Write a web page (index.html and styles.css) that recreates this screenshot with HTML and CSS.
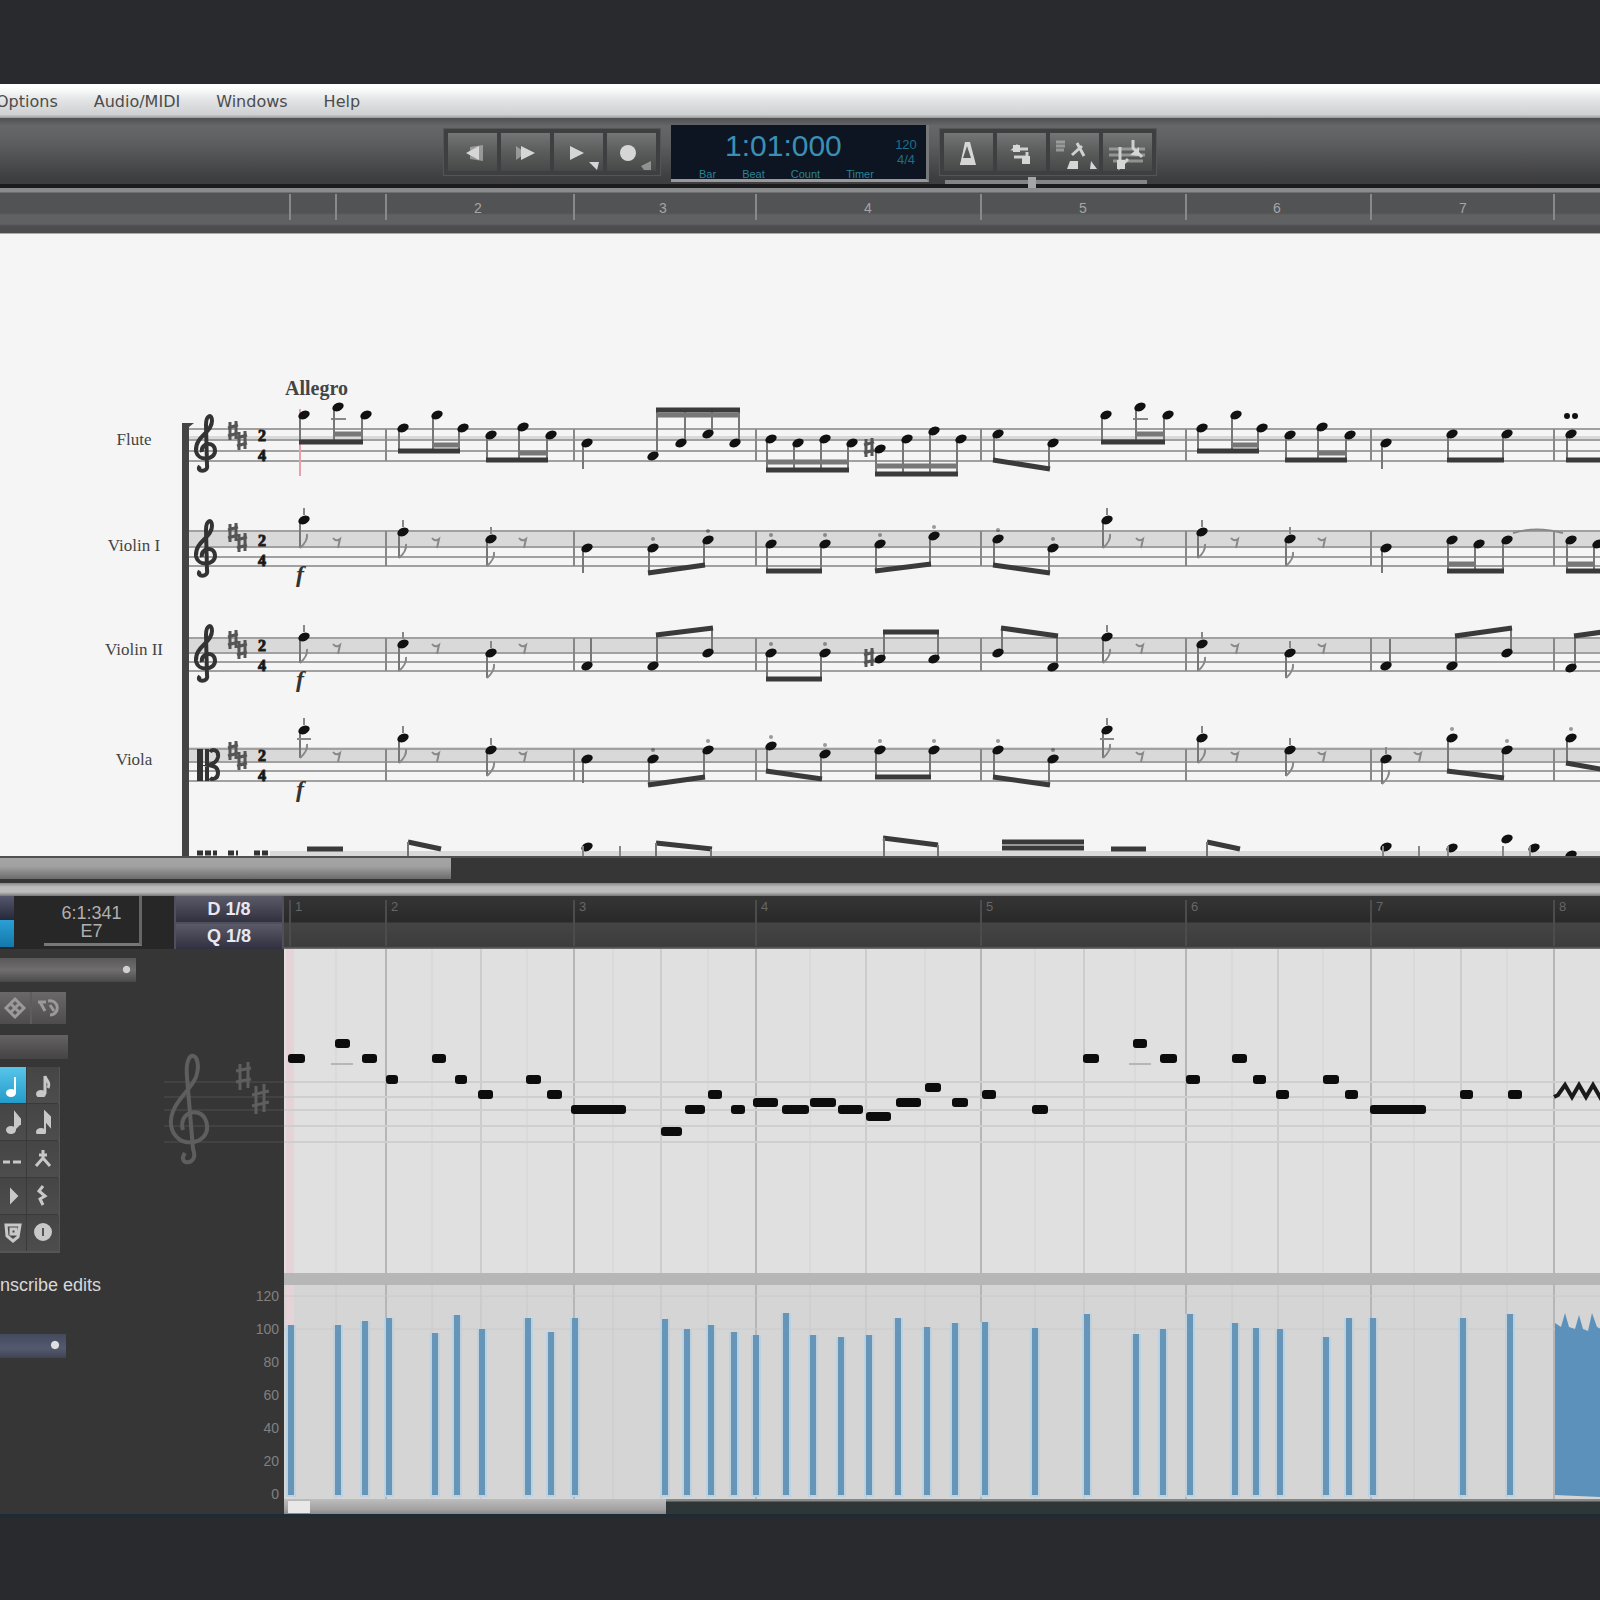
FILE: index.html
```html
<!DOCTYPE html>
<html lang="en">
<head>
    <meta charset="UTF-8">
    <meta name="viewport" content="width=device-width, initial-scale=1.0">
    <title>Score Editor</title>
    <link rel="stylesheet" href="styles.css">
</head>
<body>
    <nav class="menubar">
        <a href="#">Options</a>
        <a href="#">Audio/MIDI</a>
        <a href="#">Windows</a>
        <a href="#">Help</a>
    </nav>

    <header class="toolbar">
        <div class="btn-group">
            <button class="tool" aria-label="Rewind"><svg width="48" height="40"><path class="dim" d="M22 14l13-2v16l-13-2z"/><path d="M18 20l13-7v14z"/></svg></button>
            <button class="tool" aria-label="Forward"><svg width="48" height="40"><path class="dim" d="M15 13l10 7-10 7z"/><path d="M20 13l14 7-14 7z"/></svg></button>
            <button class="tool" aria-label="Play"><svg width="48" height="40"><path d="M16 13l14 7-14 7z"/><path d="M35 29h10l-2 8z"/></svg></button>
            <button class="tool" aria-label="Record"><svg width="48" height="40"><circle cx="21" cy="20" r="8"/><path class="dim" d="M34 33l10-5v9h-7z"/></svg></button>
        </div>
        <div class="lcd">
            <div class="lcd-time">1:01:000</div>
            <div class="lcd-tempo"><span>120</span><span>4/4</span></div>
            <div class="lcd-labels"><span>Bar</span><span>Beat</span><span>Count</span><span>Timer</span></div>
        </div>
        <div class="right-tools">
            <div class="btn-group">
                <button class="tool" aria-label="Metronome"><svg width="48" height="40"><path fill-rule="evenodd" d="M21 9h5l6 23H16zM23 13l-4 12h8z"/><path d="M18 25h12v7H16z"/></svg></button>
                <button class="tool" aria-label="Loop"><svg width="48" height="40"><path class="line" d="M31 16H17l4-4M17 24h14M30 19v8"/><path d="M16 12h7v7h-7zM25 23h8v8h-8z"/></svg></button>
                <button class="tool" aria-label="Count in"><svg width="48" height="40"><path class="line dim" d="M6 9h9M6 13h9M6 17h8"/><path class="line" d="M27 10l7 13M22 22l10-9"/><path d="M17 36l3-8h8v8zM41 28l6 8h-7z"/></svg></button>
                <button class="tool" aria-label="Punch"><svg width="48" height="40"><path class="line dim" d="M6 16h36M6 22h36M10 28h30"/><path class="line" d="M30 7v8l9 9M17 14v20l8-8"/><path d="M27 22l9-8v9zM14 27h8v9h-8z"/></svg></button>
            </div>
            <input class="speed" type="range" min="0" max="100" value="43" aria-label="Speed">
        </div>
    </header>

    <svg class="ruler" id="ruler"></svg>

    <main>
        <section class="score">
            <svg id="score" role="img" aria-label="Score"></svg>
        </section>
        <div class="h-scroll"><div class="h-thumb"></div></div>
        <div class="splitter"></div>

        <section class="editor">
            <aside class="side">
                <div class="side-head">
                    <div class="modes"><button aria-label="Mode A"></button><button class="on" aria-label="Mode B"></button></div>
                    <div class="position"><span>6:1:341</span><span>E7</span></div>
                    <div class="quant"><button>D 1/8</button><button>Q 1/8</button></div>
                </div>
                <div class="side-body">
                    <div class="controls">
                        <select class="track-select" aria-label="Track"><option></option></select>
                        <div class="small-tools">
                            <button aria-label="Settings"><svg width="24" height="24"><path d="M12 3l9 9-9 9-9-9zM7 7l10 10M17 7L7 17"/></svg></button>
                            <button aria-label="Refresh"><svg width="28" height="24"><path d="M3 6h8M5 6l5 9M13 5c12-2 12 14 2 14M15 9l4 6"/></svg></button>
                        </div>
                        <div class="slot"></div>
                        <div class="palette" id="palette"></div>
                        <div class="caption">nscribe edits</div>
                        <select class="edit-select" aria-label="Edits"><option></option></select>
                    </div>
                    <svg class="side-staff" id="sideStaff"></svg>
                </div>
            </aside>
            <div class="roll">
                <svg class="roll-ruler" id="rollRuler"></svg>
                <svg class="notes" id="notes"></svg>
                <div class="roll-divider"></div>
                <svg class="velocity" id="velocity"></svg>
                <div class="roll-scroll"><div class="roll-thumb"><button aria-label="Scroll left"></button></div></div>
            </div>
        </section>
    </main>

    <script src="script.js"></script>
</body>
</html>
```
FILE: styles.css
```css
* {
    box-sizing: border-box;
}
body {
    margin: 0;
    padding-top: 84px;
    min-height: 100vh;
    background-color: #292a2e;
    font-family: "Liberation Sans", Arial, sans-serif;
    overflow-x: hidden;
}
svg {
    display: block;
}
button {
    border: 0;
    padding: 0;
    font-family: inherit;
}

/* Menu */
.menubar {
    display: flex;
    gap: 36px;
    height: 34px;
    align-items: center;
    background: linear-gradient(#fff 10%, #e4e5e6 45%, #cfd0d1 90%, #999);
}
.menubar a {
    color: #4c4c4c;
    text-decoration: none;
    font-family: "DejaVu Sans", sans-serif;
    font-size: 16px;
}
.menubar a:first-child {
    margin-left: -4px;
}

/* Transport toolbar */
.toolbar {
    display: flex;
    justify-content: center;
    gap: 10px;
    height: 70px;
    padding-top: 7px;
    background: linear-gradient(#505052, #666769 12%, #5c5d5f 40%, #3e3e40 92%);
    border-bottom: 4px solid #1c1c1e;
}
.btn-group {
    display: flex;
    gap: 4px;
    height: 48px;
    padding: 4px;
    margin-top: 3px;
    background: #3e3f40;
    border: 1px solid #555;
}
.tool {
    width: 49px;
    background: linear-gradient(#747575, #5a5b5b 50%, #474848);
    fill: #d6d6d6;
}
.tool .dim {
    opacity: 0.5;
}
.tool .line {
    fill: none;
    stroke: #d0d0d0;
    stroke-width: 3;
}
.lcd {
    display: grid;
    grid-template-columns: 1fr 40px;
    grid-template-rows: 1fr 14px;
    width: 258px;
    height: 57px;
    background: #0d1422;
    border-right: 3px solid #77787a;
    border-bottom: 3px solid #98999b;
}
.lcd-time {
    padding-left: 54px;
    color: #3b8fb4;
    font-size: 30px;
    line-height: 42px;
    white-space: nowrap;
}
.lcd-tempo {
    display: flex;
    flex-direction: column;
    align-items: center;
    padding-top: 12px;
    color: #1f6f85;
    font-size: 13px;
    line-height: 15px;
}
.lcd-labels {
    grid-column: 1 / 3;
    display: flex;
    gap: 26px;
    padding-left: 28px;
    color: #2a8494;
    font-size: 11px;
    line-height: 14px;
}
.right-tools {
    display: flex;
    flex-direction: column;
}
.speed {
    appearance: none;
    width: 202px;
    height: 4px;
    margin: 4px 6px 0;
    background: #848586;
}
.speed::-webkit-slider-thumb {
    appearance: none;
    width: 8px;
    height: 11px;
    background: #a5a6a7;
}

/* Ruler over the score */
.ruler {
    width: 100%;
    height: 45px;
    background: linear-gradient(#8a8b8c 0 4px, #525355 5px 25px, #606163 27px 36px, #4d4d4f 38px);
}
.ruler line {
    stroke: #88898a;
    stroke-width: 2;
}
.ruler text {
    fill: #a4a5a6;
    font-size: 14px;
    text-anchor: middle;
}

/* Score */
.score {
    background: #f5f5f5;
    border-top: 1px solid #aaa;
}
.score svg {
    width: 100%;
    height: 622px;
}
.band {
    fill: #d9d9d9;
}
.staff-line {
    stroke: #a0a0a0;
    stroke-width: 2;
}
.bar-line {
    stroke: #888;
    stroke-width: 2;
}
.stem {
    stroke: #777;
    stroke-width: 2;
}
.head {
    fill: #111;
}
.beam {
    stroke: #3a3a3a;
    stroke-width: 5;
}
.beam.second {
    stroke: #777;
    stroke-width: 5;
}
.thin {
    fill: none;
    stroke: #888;
    stroke-width: 2;
}
.clef {
    fill: none;
    stroke: #333;
    stroke-width: 4;
}
.sharp {
    fill: none;
    stroke: #555;
    stroke-width: 3;
}
.playhead {
    stroke: #eaa0a8;
    stroke-width: 2;
}
.part, .tempo, .meter, .dynamic {
    font-family: "Liberation Serif", "Times New Roman", serif;
    fill: #444;
}
.part {
    font-size: 17px;
    text-anchor: middle;
}
.tempo {
    font-size: 20px;
    font-weight: bold;
}
.meter {
    font-size: 16px;
    font-weight: bold;
    text-anchor: middle;
    fill: #111;
    stroke: #222;
}
.dynamic {
    font-size: 24px;
    font-weight: bold;
    font-style: italic;
    text-anchor: middle;
    fill: #333;
}

/* Scroll bar and splitter */
.h-scroll {
    height: 27px;
    background: #363637;
    border-top: 2px solid #505050;
}
.h-thumb {
    width: 28.2%;
    height: 21px;
    background: linear-gradient(#a5a5a5, #a0a0a0 40%, #6c6c6c);
}
.splitter {
    height: 13px;
    background: linear-gradient(#888, #bcbcbc 30%, #bcbcbc 70%, #777);
}

/* Lower editor */
.editor {
    display: flex;
    border-bottom: 3px solid #202a33;
}
.side {
    display: flex;
    flex-direction: column;
    width: 284px;
    flex: none;
    background: #363636;
}
.side-head {
    display: flex;
    height: 53px;
    background: #272728;
}
.modes {
    display: flex;
    flex-direction: column;
    width: 14px;
    margin-right: 30px;
}
.modes button {
    height: 24px;
    background: linear-gradient(#55586e, #25273a);
}
.modes .on {
    height: 27px;
    background: linear-gradient(#2b9fd4, #1378ad);
}
.position {
    display: flex;
    flex-direction: column;
    align-items: center;
    width: 98px;
    height: 50px;
    padding-top: 8px;
    color: #b0b0b0;
    font-size: 18px;
    line-height: 18px;
    border-right: 3px solid #666;
    border-bottom: 3px solid #777;
}
.quant {
    display: flex;
    flex-direction: column;
    gap: 2px;
    width: 110px;
    margin-left: 32px;
    padding: 0 2px;
    background: #50505c;
}
.quant button {
    flex: 1;
    color: #e8e8ee;
    font-size: 18px;
    line-height: 20px;
    font-weight: bold;
    background: linear-gradient(#5a5a68, #303040);
}
.side-body {
    display: flex;
    flex: 1;
}
.controls {
    display: flex;
    flex-direction: column;
    align-items: flex-start;
    width: 140px;
    padding-top: 9px;
}
.track-select, .edit-select {
    appearance: none;
    border: 0;
    height: 24px;
    border-radius: 0;
}
.track-select {
    width: 136px;
    background: radial-gradient(#d0d0d0 50%, transparent 65%) 122px 7px / 9px 9px no-repeat, linear-gradient(#5a595a, #706e6f 50%, #4a494a);
}
.edit-select {
    width: 66px;
    margin-top: 37px;
    background: radial-gradient(#e0e0e0 50%, transparent 65%) 50px 6px / 10px 10px no-repeat, linear-gradient(#454a5c, #535a70 60%, #404352);
}
.small-tools {
    display: flex;
    gap: 2px;
    margin-top: 10px;
    background: #5e5c5d;
}
.small-tools button {
    height: 32px;
    padding: 4px 3px;
    background: linear-gradient(#6a6869, #4e4c4d);
}
.small-tools svg {
    fill: none;
    stroke: #9a9a9a;
    stroke-width: 3;
}
.slot {
    width: 68px;
    height: 24px;
    margin-top: 11px;
    background: linear-gradient(#646263, #454445);
}
.palette {
    display: grid;
    grid-template-columns: 26px 32px;
    grid-auto-rows: 36px;
    gap: 1px;
    width: 60px;
    margin-top: 8px;
    background: #3a3a3a;
    border-right: 2px solid #555;
    border-bottom: 2px solid #555;
}
.palette button {
    background: linear-gradient(#454545, #4d4d4d);
    color: #c8c8c8;
}
.palette .on {
    background: linear-gradient(#58c4ea, #249cc9);
    color: #fff;
}
.palette svg {
    margin: auto;
    fill: currentColor;
    stroke: currentColor;
    stroke-width: 2;
}
.palette .open {
    fill: none;
    stroke-width: 3;
}
.caption {
    margin-top: 20px;
    color: #d8d8d8;
    font-size: 18px;
    line-height: 24px;
    white-space: nowrap;
}
.side-staff {
    flex: 1;
    width: 144px;
}
.side-staff line {
    stroke: #424242;
    stroke-width: 2;
}
.side-staff .clef, .side-staff .sharp {
    stroke: #5e5e5e;
}
.side-staff text {
    fill: #808080;
    font-size: 14px;
    text-anchor: end;
}

.roll {
    flex: 1;
    min-width: 0;
}
.roll svg {
    width: 100%;
}
.roll-ruler {
    height: 53px;
    background: linear-gradient(#353535, #292929 48%, #454545 52%, #3c3c3c 95%, #777);
}
.roll-ruler line {
    stroke: #4c4c4c;
    stroke-width: 2;
}
.roll-ruler text {
    fill: #666;
    font-size: 13px;
}
.notes {
    height: 324px;
    background: #e0e0e0;
}
.roll .grid-bar {
    stroke: #b6b6b6;
    stroke-width: 2;
}
.roll .grid-beat {
    stroke: #cccccc;
    stroke-width: 2;
}
.roll .grid-sub {
    stroke: #d4d4d4;
    stroke-width: 1;
}
.notes .roll-line {
    stroke: #cfcfcf;
    stroke-width: 2;
}
.note {
    fill: #0c0c0c;
}
.trill {
    fill: none;
    stroke: #1a1a1a;
    stroke-width: 4;
}
.cursor {
    fill: #e6d3d7;
}
.roll-divider {
    height: 12px;
    background: #b6b6b6;
}
.velocity {
    height: 214px;
    background: #d5d5d5;
}
.velocity .grid-sub {
    stroke: #cacaca;
}
.vel-halo {
    fill: #bdd2e0;
}
.vel {
    fill: #6695b8;
}
.solid {
    fill: #5c91bc;
}
.roll-scroll {
    height: 15px;
    background: linear-gradient(#888 0 2px, #2e3638 3px);
}
.roll-thumb {
    width: 29%;
    height: 15px;
    padding: 2px 4px;
    background: linear-gradient(#bdbdbd, #a2a2a2 70%, #888);
}
.roll-thumb button {
    display: block;
    width: 22px;
    height: 12px;
    background: #e8e8e8;
}
```
FILE: script.js
```js
const bars = [386, 574, 756, 981, 1186, 1371, 1554];
const beats = [481, 661, 866, 1084, 1278, 1461];
const subs = [336, 432, 527, 613, 708, 810, 925, 1035, 1135, 1232, 1323, 1414, 1507];

function line(x1, y1, x2, y2, cls) {
    return `<line class="${cls}" x1="${x1}" y1="${y1}" x2="${x2}" y2="${y2}"/>`;
}

function head(x, y) {
    return `<ellipse class="head" cx="${x}" cy="${y}" rx="6" ry="4" transform="rotate(-25 ${x} ${y})"/>`;
}

// Beamed notes, b1 and b2 are the beam height at the first and last note
function group(heads, b1, b2, opt = {}) {
    const side = opt.up ? 4 : -4;
    const first = heads[0][0];
    const last = heads[heads.length - 1][0];
    const beamY = x => b1 + (b2 - b1) * (x - first) / (last - first);
    let out = '';
    heads.forEach(([x, y]) => {
        out += line(x + side, y, x + side, beamY(x), 'stem') + head(x, y);
        if (opt.dots) out += `<circle class="head" cx="${x}" cy="${y - 9}" r="2" opacity=".4"/>`;
    });
    out += line(first + side - 1, b1, last + side + 1, b2, 'beam');
    if (opt.second) {
        const [from, to, gap] = opt.second;
        out += line(heads[from][0] + side, b1 - gap, heads[to][0] + side, b2 - gap, 'beam second');
    }
    return out;
}

function quarter(x, y, end) {
    const sx = end > y ? x - 4 : x + 4;
    return line(sx, y, sx, end, 'stem') + head(x, y);
}

function eighth(x, y, end) {
    return quarter(x, y, end) + line(x, y - 12, x, y - 5, 'thin') +
        `<path class="thin" d="M${x - 4} ${end}q8 -7 7 -14"/>`;
}

function rest(x, y) {
    return `<path class="thin" d="M${x - 4} ${y - 5}q3 4 7 1l-2 9"/>`;
}

function sharp(x, y) {
    return `<path class="sharp" d="M${x - 3} ${y - 9}v18M${x + 3} ${y - 10}v18M${x - 5} ${y - 3}l10 -3M${x - 5} ${y + 5}l10 -3"/>`;
}

function treble(x, y) {
    return `<path class="clef" transform="translate(${x} ${y})" d="M-6 23c-5 6 9 7 7 -1l-1 -40c0 -10 6 -12 6 -4c0 12 -17 15 -16 30c2 11 19 9 19 0c0 -11 -15 -8 -13 1"/>`;
}

function alto(x, y) {
    return `<path fill="#333" d="M${x - 11} ${y - 16}h6v32h-6z"/><path class="clef" d="M${x - 1} ${y - 16}v32M${x + 2} ${y - 13}c2 -3 9 -3 8 5c-1 6 -6 7 -9 8c5 1 9 2 9 8c0 6 -6 7 -8 5"/>`;
}

function drawRuler() {
    let out = '';
    [290, 336, ...bars].forEach(x => out += line(x, 6, x, 32, ''));
    [478, 663, 868, 1083, 1277, 1463].forEach((x, i) => out += `<text x="${x}" y="25">${i + 2}</text>`);
    document.getElementById('ruler').innerHTML = out;
}

const staves = [
    { name: 'Flute', label: 444, lines: [428, 439, 450, 460], band: [435, 5] },
    { name: 'Violin I', label: 550, lines: [530, 546, 556, 565], band: [529, 16] },
    { name: 'Violin II', label: 654, lines: [637, 652, 661, 670], band: [638, 14] },
    { name: 'Viola', label: 764, lines: [748, 761, 770, 780], band: [746, 14] }
];

function drawScore() {
    let out = '<g transform="translate(0 -233)">';
    staves.forEach((s, i) => {
        const top = s.lines[0];
        const bottom = s.lines[3];
        out += `<text class="part" x="134" y="${s.label}">${s.name}</text>`;
        out += `<rect class="band" x="188" y="${s.band[0]}" width="100%" height="${s.band[1]}"/>`;
        s.lines.forEach(y => out += line(188, y, '100%', y, 'staff-line'));
        bars.forEach(x => out += line(x, top, x, bottom, 'bar-line'));
        out += i < 3 ? treble(206, bottom - 18) : alto(208, 764);
        out += sharp(233, top + 2) + sharp(242, top + 12);
        out += `<text class="meter" x="262" y="${bottom - 20}">2</text><text class="meter" x="262" y="${bottom}">4</text>`;
        if (i > 0) out += `<text class="dynamic" x="300" y="${bottom + 16}">f</text>`;
    });
    out += '<path d="M182 422h12l-5 4v429h-7z" fill="#444"/>';
    out += '<text class="tempo" x="285" y="394">Allegro</text>';
    out += line(300, 408, 300, 475, 'playhead');

    // Flute
    [0, 802].forEach(d => {
        out += line(331 + d, 418, 346 + d, 418, 'thin');
        out += group([[304 + d, 414], [338 + d, 406], [366 + d, 414]], 441, 441, { second: [1, 2, 8] });
    });
    [0, 799].forEach(d => {
        out += group([[403 + d, 427], [437 + d, 414], [463 + d, 427]], 450, 450, { second: [1, 2, 6] });
        out += group([[491 + d, 434], [523 + d, 426], [551 + d, 434]], 459, 459, { second: [1, 2, 7] });
    });
    out += quarter(587, 442, 468);
    out += group([[653, 455], [681, 442], [708, 433], [735, 442]], 409, 409, { up: true, second: [0, 3, -5] });
    out += group([[771, 438], [798, 442], [825, 438], [852, 442]], 469, 469, { second: [0, 3, 8] });
    out += sharp(869, 447) + group([[880, 448], [907, 438], [934, 430], [961, 438]], 473, 473, { second: [0, 3, 8] });
    out += group([[998, 433], [1053, 442]], 459, 468);
    out += quarter(1386, 442, 468);
    out += group([[1452, 433], [1507, 433]], 459, 459);
    out += group([[1571, 433], [1626, 433]], 459, 459);
    out += '<circle class="head" cx="1567" cy="415" r="3"/><circle class="head" cx="1575" cy="415" r="3"/>';

    // Single notes and rests shared by the three string parts
    [0, 803].forEach(d => {
        const e = d ? 799 : 0;
        out += eighth(304 + d, 519, 547) + eighth(403 + e, 531, 557) + eighth(491 + e, 538, 565);
        out += eighth(304 + d, 636, 662) + eighth(403 + e, 643, 670) + eighth(491 + e, 652, 677);
        out += eighth(304 + d, 729, 757) + eighth(403 + e, 737, 762) + eighth(491 + e, 749, 775);
        out += line(297 + d, 738, 311 + d, 738, 'thin');
        [542, 648, 756].forEach(y => out += rest(337 + d, y) + rest(436 + e, y) + rest(523 + e, y));
    });

    // Violin I
    out += quarter(587, 547, 572) + quarter(1386, 547, 572);
    out += group([[653, 547], [708, 539]], 572, 564, { dots: true });
    out += group([[771, 543], [825, 543]], 570, 570, { dots: true });
    out += group([[880, 543], [934, 535]], 570, 563, { dots: true });
    out += group([[998, 538], [1053, 547]], 564, 572, { dots: true });
    out += group([[1452, 539], [1479, 543], [1507, 539]], 570, 570, { second: [0, 1, 7] });
    out += group([[1571, 539], [1598, 543], [1626, 539]], 570, 570, { second: [0, 1, 7] });
    out += '<path class="thin" d="M1513 532q23 -7 50 0"/>';

    // Violin II
    out += quarter(587, 665, 637) + quarter(1386, 665, 638);
    out += group([[653, 665], [708, 652]], 634, 627, { up: true });
    out += group([[771, 652], [825, 652]], 678, 678, { dots: true });
    out += sharp(869, 657) + group([[880, 658], [934, 658]], 631, 631, { up: true });
    out += group([[998, 652], [1053, 666]], 627, 635, { up: true });
    out += group([[1452, 665], [1507, 652]], 635, 627, { up: true });
    out += group([[1571, 667], [1626, 652]], 635, 627, { up: true });

    // Viola
    out += quarter(587, 758, 782) + eighth(1386, 758, 783) + rest(1418, 756);
    out += group([[653, 758], [708, 749]], 784, 776, { dots: true });
    out += group([[771, 745], [825, 753]], 770, 778, { dots: true });
    out += group([[880, 749], [934, 749]], 776, 776, { dots: true });
    out += group([[998, 749], [1053, 758]], 776, 784, { dots: true });
    out += group([[1452, 737], [1507, 749]], 770, 777, { dots: true });
    out += group([[1571, 737], [1626, 749]], 762, 772, { dots: true });

    // Top edge of the cello part
    out += '<rect class="band" x="270" y="850" width="100%" height="5"/>';
    out += '<path d="M197 852h20M228 852h10M254 852h14" stroke="#333" stroke-width="5" stroke-dasharray="6 2"/>';
    out += line(307, 848, 343, 848, 'beam') + line(408, 841, 441, 848, 'beam') + line(408, 841, 408, 855, 'stem');
    out += line(656, 842, 712, 848, 'beam') + line(656, 842, 656, 855, 'stem') + line(711, 848, 711, 855, 'stem');
    out += line(883, 837, 938, 844, 'beam') + line(884, 837, 884, 855, 'stem') + line(938, 844, 938, 855, 'stem');
    out += line(1002, 841, 1084, 841, 'beam') + line(1002, 847, 1084, 847, 'beam');
    out += line(1111, 848, 1146, 848, 'beam') + line(1207, 841, 1240, 848, 'beam') + line(1207, 841, 1207, 855, 'stem');
    [[587, 846], [1386, 846], [1452, 847], [1507, 838], [1534, 847], [1571, 854]].forEach(p => out += head(p[0], p[1]));
    [583, 620, 1383, 1419, 1448, 1503, 1530].forEach(x => out += line(x, 845, x, 855, 'thin'));
    document.getElementById('score').innerHTML = out + '</g>';
}

// start, end, height of each note in the roll
const rollNotes = [
    [288, 305, 1058], [335, 350, 1043], [362, 377, 1058], [386, 398, 1079], [432, 446, 1058],
    [455, 467, 1079], [478, 493, 1094], [526, 541, 1079], [547, 562, 1094], [571, 626, 1109],
    [661, 682, 1131], [685, 705, 1109], [708, 722, 1094], [731, 745, 1109], [753, 778, 1102],
    [782, 809, 1109], [810, 836, 1102], [838, 863, 1109], [866, 891, 1116], [896, 921, 1102],
    [925, 941, 1087], [952, 968, 1102], [982, 996, 1094], [1032, 1048, 1109], [1083, 1099, 1058],
    [1133, 1147, 1043], [1160, 1177, 1058], [1186, 1200, 1079], [1232, 1247, 1058], [1253, 1266, 1079],
    [1276, 1289, 1094], [1323, 1339, 1079], [1345, 1358, 1094], [1370, 1426, 1109], [1460, 1473, 1094],
    [1508, 1522, 1094]
];

const velocities = [
    [291, 1324], [338, 1324], [365, 1320], [389, 1317], [435, 1332], [457, 1314], [482, 1328],
    [528, 1317], [551, 1331], [575, 1317], [665, 1318], [687, 1328], [711, 1324], [734, 1331],
    [756, 1334], [786, 1312], [813, 1334], [841, 1336], [869, 1334], [898, 1317], [927, 1326],
    [955, 1322], [985, 1321], [1035, 1327], [1087, 1313], [1136, 1333], [1163, 1328], [1190, 1313],
    [1235, 1322], [1256, 1327], [1280, 1328], [1326, 1336], [1349, 1317], [1373, 1317], [1463, 1317],
    [1510, 1313]
];

function grid(height) {
    let out = `<rect class="cursor" x="286" y="0" width="8" height="${height}"/>`;
    subs.forEach(x => out += line(x, 0, x, height, 'grid-sub'));
    beats.forEach(x => out += line(x, 0, x, height, 'grid-beat'));
    bars.forEach(x => out += line(x, 0, x, height, 'grid-bar'));
    return out;
}

function drawRoll() {
    let out = '<g transform="translate(-284 0)">';
    [290, ...bars].forEach((x, i) => out += line(x, 4, x, 50, '') + `<text x="${x + 5}" y="15">${i + 1}</text>`);
    document.getElementById('rollRuler').innerHTML = out + '</g>';

    out = '<g transform="translate(-284 0)">' + grid(324);
    [133, 148, 161, 177, 193].forEach(y => out += `<line class="roll-line" x1="284" x2="150%" y1="${y}" y2="${y}"/>`);
    [331, 1129].forEach(x => out += line(x, 115, x + 22, 115, 'grid-bar'));
    rollNotes.forEach(([a, b, y]) => out += `<rect class="note" x="${a}" y="${y - 948 - 5}" width="${b - a}" height="9" rx="3"/>`);
    out += '<path class="trill" d="M1554 148l4 -2l7 -10l7 12l7 -12l7 12l7 -12l7 12l7 -12"/>';
    document.getElementById('notes').innerHTML = out + '</g>';

    out = '<g transform="translate(-284 0)">' + grid(214);
    [11, 44].forEach(y => out += `<line class="grid-sub" x1="284" x2="150%" y1="${y}" y2="${y}"/>`);
    velocities.forEach(([x, y]) => {
        out += `<rect class="vel-halo" x="${x - 5}" y="${y - 1284}" width="10" height="${1496 - y}"/>`;
        out += `<rect class="vel" x="${x - 3}" y="${y - 1284}" width="6" height="${1494 - y}"/>`;
    });
    out += '<path class="solid" d="M1555 210V38l6 4l4 -14l4 14l6 2l4 -14l4 14l5 2l4 -18l5 14l4 2v168z"/>';
    document.getElementById('velocity').innerHTML = out + '</g>';
}

function drawSide() {
    let out = '';
    [133, 148, 161, 177, 193].forEach(y => out += line(24, y, 144, y, ''));
    out += '<path class="clef" d="M45 204c-9 13 15 13 8 -4l-6 -72c-3 -32 17 -24 9 0c-6 15 -27 27 -25 48c4 26 39 20 36 0c-3 -21 -30 -14 -24 5"/>';
    out += '<path class="sharp" d="M100 115v26M108 113v26M96 122l15 -3M96 133l15 -3M116 137v28M124 135v28M112 146l17 -4M112 157l17 -4"/>';
    [120, 100, 80, 60, 40, 20, 0].forEach((n, i) => out += `<text x="139" y="${352 + i * 33}">${n}</text>`);
    document.getElementById('sideStaff').innerHTML = out;
}

const paletteIcons = [
    ['Half', '<ellipse cx="8" cy="20" rx="4" ry="3"/><path d="M12 20V4"/>'],
    ['Eighth', '<ellipse cx="8" cy="21" rx="4" ry="3"/><path class="open" d="M12 21V3c1 5 6 6 3 12"/>'],
    ['Sixteenth', '<ellipse cx="8" cy="20" rx="4" ry="3"/><path d="M12 20V3l5 6v6"/>'],
    ['Thirty-second', '<ellipse cx="8" cy="22" rx="4" ry="3"/><path d="M12 22V2l5 5v9l-5 -6"/>'],
    ['Tie', '<path class="open" d="M0 15h7M10 15h8"/>'],
    ['Accent', '<path class="open" d="M10 3v8M3 19l7 -8l7 8M6 8h8"/>'],
    ['Dot', '<path d="M8 6v12l6 -6z"/>'],
    ['Rest', '<path class="open" d="M10 2l-4 5l6 5l-5 3l3 6"/>'],
    ['Repeat', '<path class="open" d="M3 4h14l-2 12l-5 4l-6 -5zM8 8h5v5h-5z"/>'],
    ['Info', '<circle cx="10" cy="11" r="8"/><path d="M10 7v8" stroke="#555"/>']
];

function drawPalette() {
    document.getElementById('palette').innerHTML = paletteIcons.map(([name, icon], i) =>
        `<button class="${i === 0 ? 'on' : ''}" aria-label="${name}"><svg width="20" height="24">${icon}</svg></button>`
    ).join('');
}

drawRuler();
drawScore();
drawRoll();
drawSide();
drawPalette();
```
